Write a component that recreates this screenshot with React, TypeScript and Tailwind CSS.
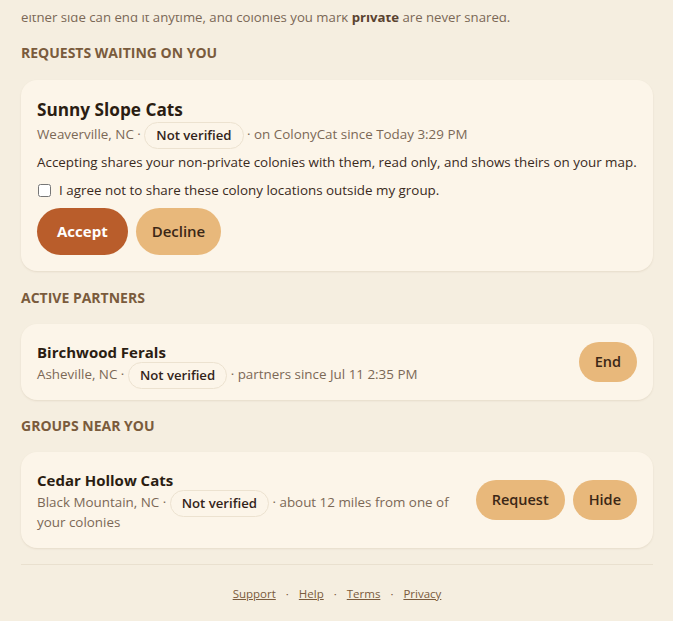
import React from "react";

const font = { fontFamily: '"Open Sans", "Noto Sans", sans-serif' };

function Pill() {
  return (
    <span className="-my-[6px] inline-block h-[27px] rounded-full border border-[#ece2d0] px-[11px] align-middle text-[13.2px] font-semibold leading-[25px] text-[#33241a]">
      Not verified
    </span>
  );
}

function SectionTitle({ children }: { children: React.ReactNode }) {
  return (
    <h2 className="text-[14px] font-bold uppercase leading-5 text-[#7a5b3c]">
      {children}
    </h2>
  );
}

function SoftButton({ label }: { label: string }) {
  return (
    <button className="h-10 rounded-full bg-[#e8b87b] px-4 text-[14.5px] font-semibold text-[#3b2716]">
      {label}
    </button>
  );
}

export default function App() {
  return (
    <div className="min-h-[621px] bg-[#f5eee0] pl-[21px] pr-[20px] text-[#7b6856]" style={font}>
      <div className="pt-[15px]">
        <div className="h-[10px] overflow-hidden">
          <p className="-mt-[8px] text-[13.2px] leading-5">
            either side can end it anytime, and colonies you mark{" "}
            <b className="text-[#5a4330]">private</b> are never shared.
          </p>
        </div>
      </div>

      <div className="mt-[18px]">
        <SectionTitle>Requests waiting on you</SectionTitle>
      </div>

      <section className="mt-[17px] rounded-2xl bg-[#fcf5e9] p-4 shadow-[0_1px_2px_rgba(120,90,50,0.12)]">
        <h3 className="text-[17.2px] font-bold leading-7 text-[#2b1d12]">Sunny Slope Cats</h3>
        <p className="h-5 text-[13.4px] leading-5">
          Weaverville, NC · <Pill /> · on ColonyCat since Today 3:29 PM
        </p>
        <p className="mt-2 text-[13.4px] leading-5 text-[#3a2a1c]">
          Accepting shares your non-private colonies with them, read only, and shows theirs on your map.
        </p>
        <label className="mt-2 flex items-center gap-2 text-[13.4px] leading-5 text-[#3a2a1c]">
          <input type="checkbox" className="ml-[1px] h-[13px] w-[13px]" />
          I agree not to share these colony locations outside my group.
        </label>
        <div className="mt-2 flex gap-2">
          <button className="h-[47px] rounded-full bg-[#b95d2b] px-5 text-[15px] font-bold text-white">
            Accept
          </button>
          <button className="h-[47px] rounded-full bg-[#e8b87b] px-4 text-[15px] font-semibold text-[#3b2716]">
            Decline
          </button>
        </div>
      </section>

      <div className="mt-[17px]">
        <SectionTitle>Active partners</SectionTitle>
      </div>

      <section className="mt-4 flex items-center gap-6 rounded-2xl bg-[#fcf5e9] px-4 py-4 shadow-[0_1px_2px_rgba(120,90,50,0.12)]">
        <div className="flex-1">
          <h3 className="text-[15px] font-bold leading-6 text-[#2b1d12]">Birchwood Ferals</h3>
          <p className="h-5 text-[13.4px] leading-5">
            Asheville, NC · <Pill /> · partners since Jul 11 2:35 PM
          </p>
        </div>
        <SoftButton label="End" />
      </section>

      <div className="mt-4">
        <SectionTitle>Groups near you</SectionTitle>
      </div>

      <section className="mt-4 flex items-center gap-6 rounded-2xl bg-[#fcf5e9] px-4 py-4 shadow-[0_1px_2px_rgba(120,90,50,0.12)]">
        <div className="flex-1">
          <h3 className="text-[15px] font-bold leading-6 text-[#2b1d12]">Cedar Hollow Cats</h3>
          <p className="text-[13.4px] leading-5">
            Black Mountain, NC · <Pill /> · about 12 miles from one of your colonies
          </p>
        </div>
        <div className="flex gap-2">
          <SoftButton label="Request" />
          <SoftButton label="Hide" />
        </div>
      </section>

      <footer className="mt-4 border-t border-[#e9e0cf] pb-4 pt-[19px]">
        <nav className="flex items-center justify-center text-[11.5px] leading-5 text-[#7a5b3c]">
          <a href="#" className="underline">Support</a>
          <span className="mx-[10px]">·</span>
          <a href="#" className="underline">Help</a>
          <span className="mx-[10px]">·</span>
          <a href="#" className="underline">Terms</a>
          <span className="mx-[10px]">·</span>
          <a href="#" className="underline">Privacy</a>
        </nav>
      </footer>
    </div>
  );
}
